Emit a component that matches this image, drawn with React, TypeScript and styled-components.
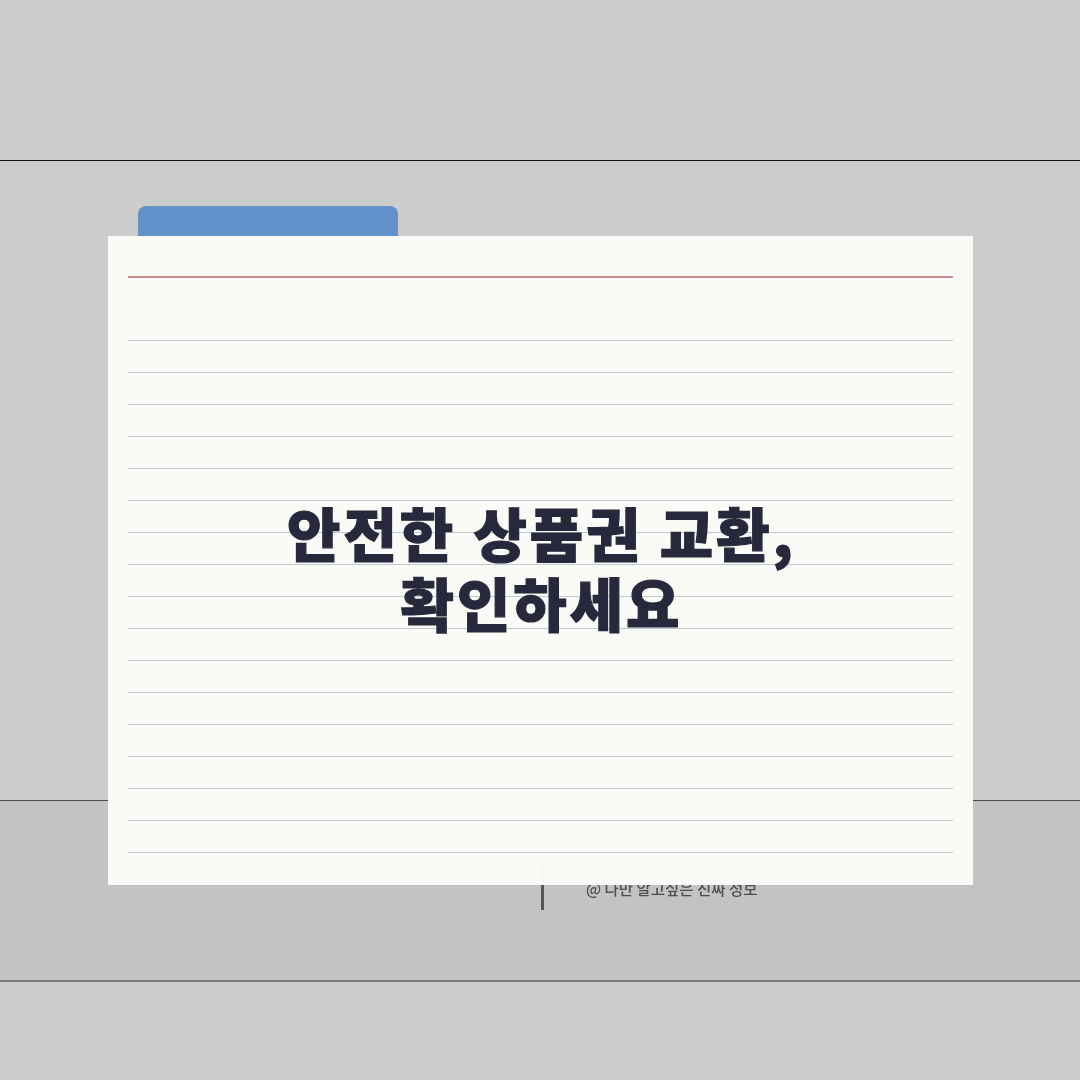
import { createGlobalStyle } from "styled-components";
import styled from "styled-components";

const Global = createGlobalStyle`
  html, body {
    margin: 0;
    padding: 0;
    background: #cccccc;
  }
  body {
    font-family: "Noto Sans CJK KR", "Noto Sans", sans-serif;
  }
`;

const Page = styled.div`
  position: relative;
  width: 1080px;
  height: 1080px;
  overflow: hidden;
  display: flex;
  flex-direction: column;
`;

const TopBand = styled.div`
  height: 160px;
  box-sizing: content-box;
  border-bottom: 1px solid #111111;
  background: #cccccc;
`;

const MiddleBand = styled.div`
  height: 639px;
  background: #cccccc;
`;

const Footer = styled.footer`
  height: 182px;
  box-sizing: border-box;
  border-top: 1px solid #4a4a4a;
  border-bottom: 2px solid #7a7a7a;
  background: #c3c3c3;
  padding: 65px 0 0 541px;
  display: flex;
  align-items: flex-start;
  gap: 42px;
`;

const FooterBar = styled.div`
  width: 3px;
  height: 44px;
  background: #555555;
  filter: blur(0.4px);
`;

const FooterText = styled.div`
  font-size: 15.5px;
  line-height: 44px;
  font-weight: 500;
  color: #4f4f4f;
  white-space: nowrap;
  filter: blur(0.6px);
`;

const BottomBand = styled.div`
  flex: 1;
  background: #cccccc;
`;

const Sheet = styled.section`
  position: absolute;
  left: 108px;
  top: 236px;
  width: 865px;
  height: 649px;
  box-sizing: border-box;
  padding: 40px 20px 0;
  background: rgba(251, 252, 247, 0.98);
`;

const Tab = styled.div`
  position: absolute;
  left: 30px;
  top: -30px;
  width: 260px;
  height: 30px;
  border-radius: 8px 8px 0 0;
  background: #6292c9;
`;

const RedRule = styled.div`
  height: 2px;
  background: #cf8b8b;
  margin-bottom: 62px;
`;

const Rules = styled.div`
  display: flex;
  flex-direction: column;
  gap: 31px;
`;

const Rule = styled.div`
  height: 1px;
  background: #bdcad2;
`;

const Title = styled.h1`
  position: absolute;
  left: 2px;
  right: 0;
  top: 261px;
  margin: 0;
  text-align: center;
  font-size: 58px;
  line-height: 70px;
  font-weight: 900;
  letter-spacing: 3px;
  word-spacing: 1px;
  color: #28283d;
  -webkit-text-stroke: 1.2px #28283d;
`;

const GhostStrip = styled.div`
  position: absolute;
  left: 207px;
  top: 430px;
  width: 449px;
  height: 22px;
  border-radius: 4px;
  background: rgba(255, 255, 255, 0.14);
`;

export default function App() {
  return (
    <Page>
      <Global />
      <TopBand />
      <MiddleBand />
      <Footer>
        <FooterBar />
        <FooterText>@ 나만 알고싶은 진짜 정보</FooterText>
      </Footer>
      <BottomBand />
      <Sheet>
        <Tab />
        <RedRule />
        <Rules>
          {Array.from({ length: 17 }, (_, i) => (
            <Rule key={i} />
          ))}
        </Rules>
        <GhostStrip />
        <Title>
          안전한 상품권 교환,
          <br />
          확인하세요
        </Title>
      </Sheet>
    </Page>
  );
}
